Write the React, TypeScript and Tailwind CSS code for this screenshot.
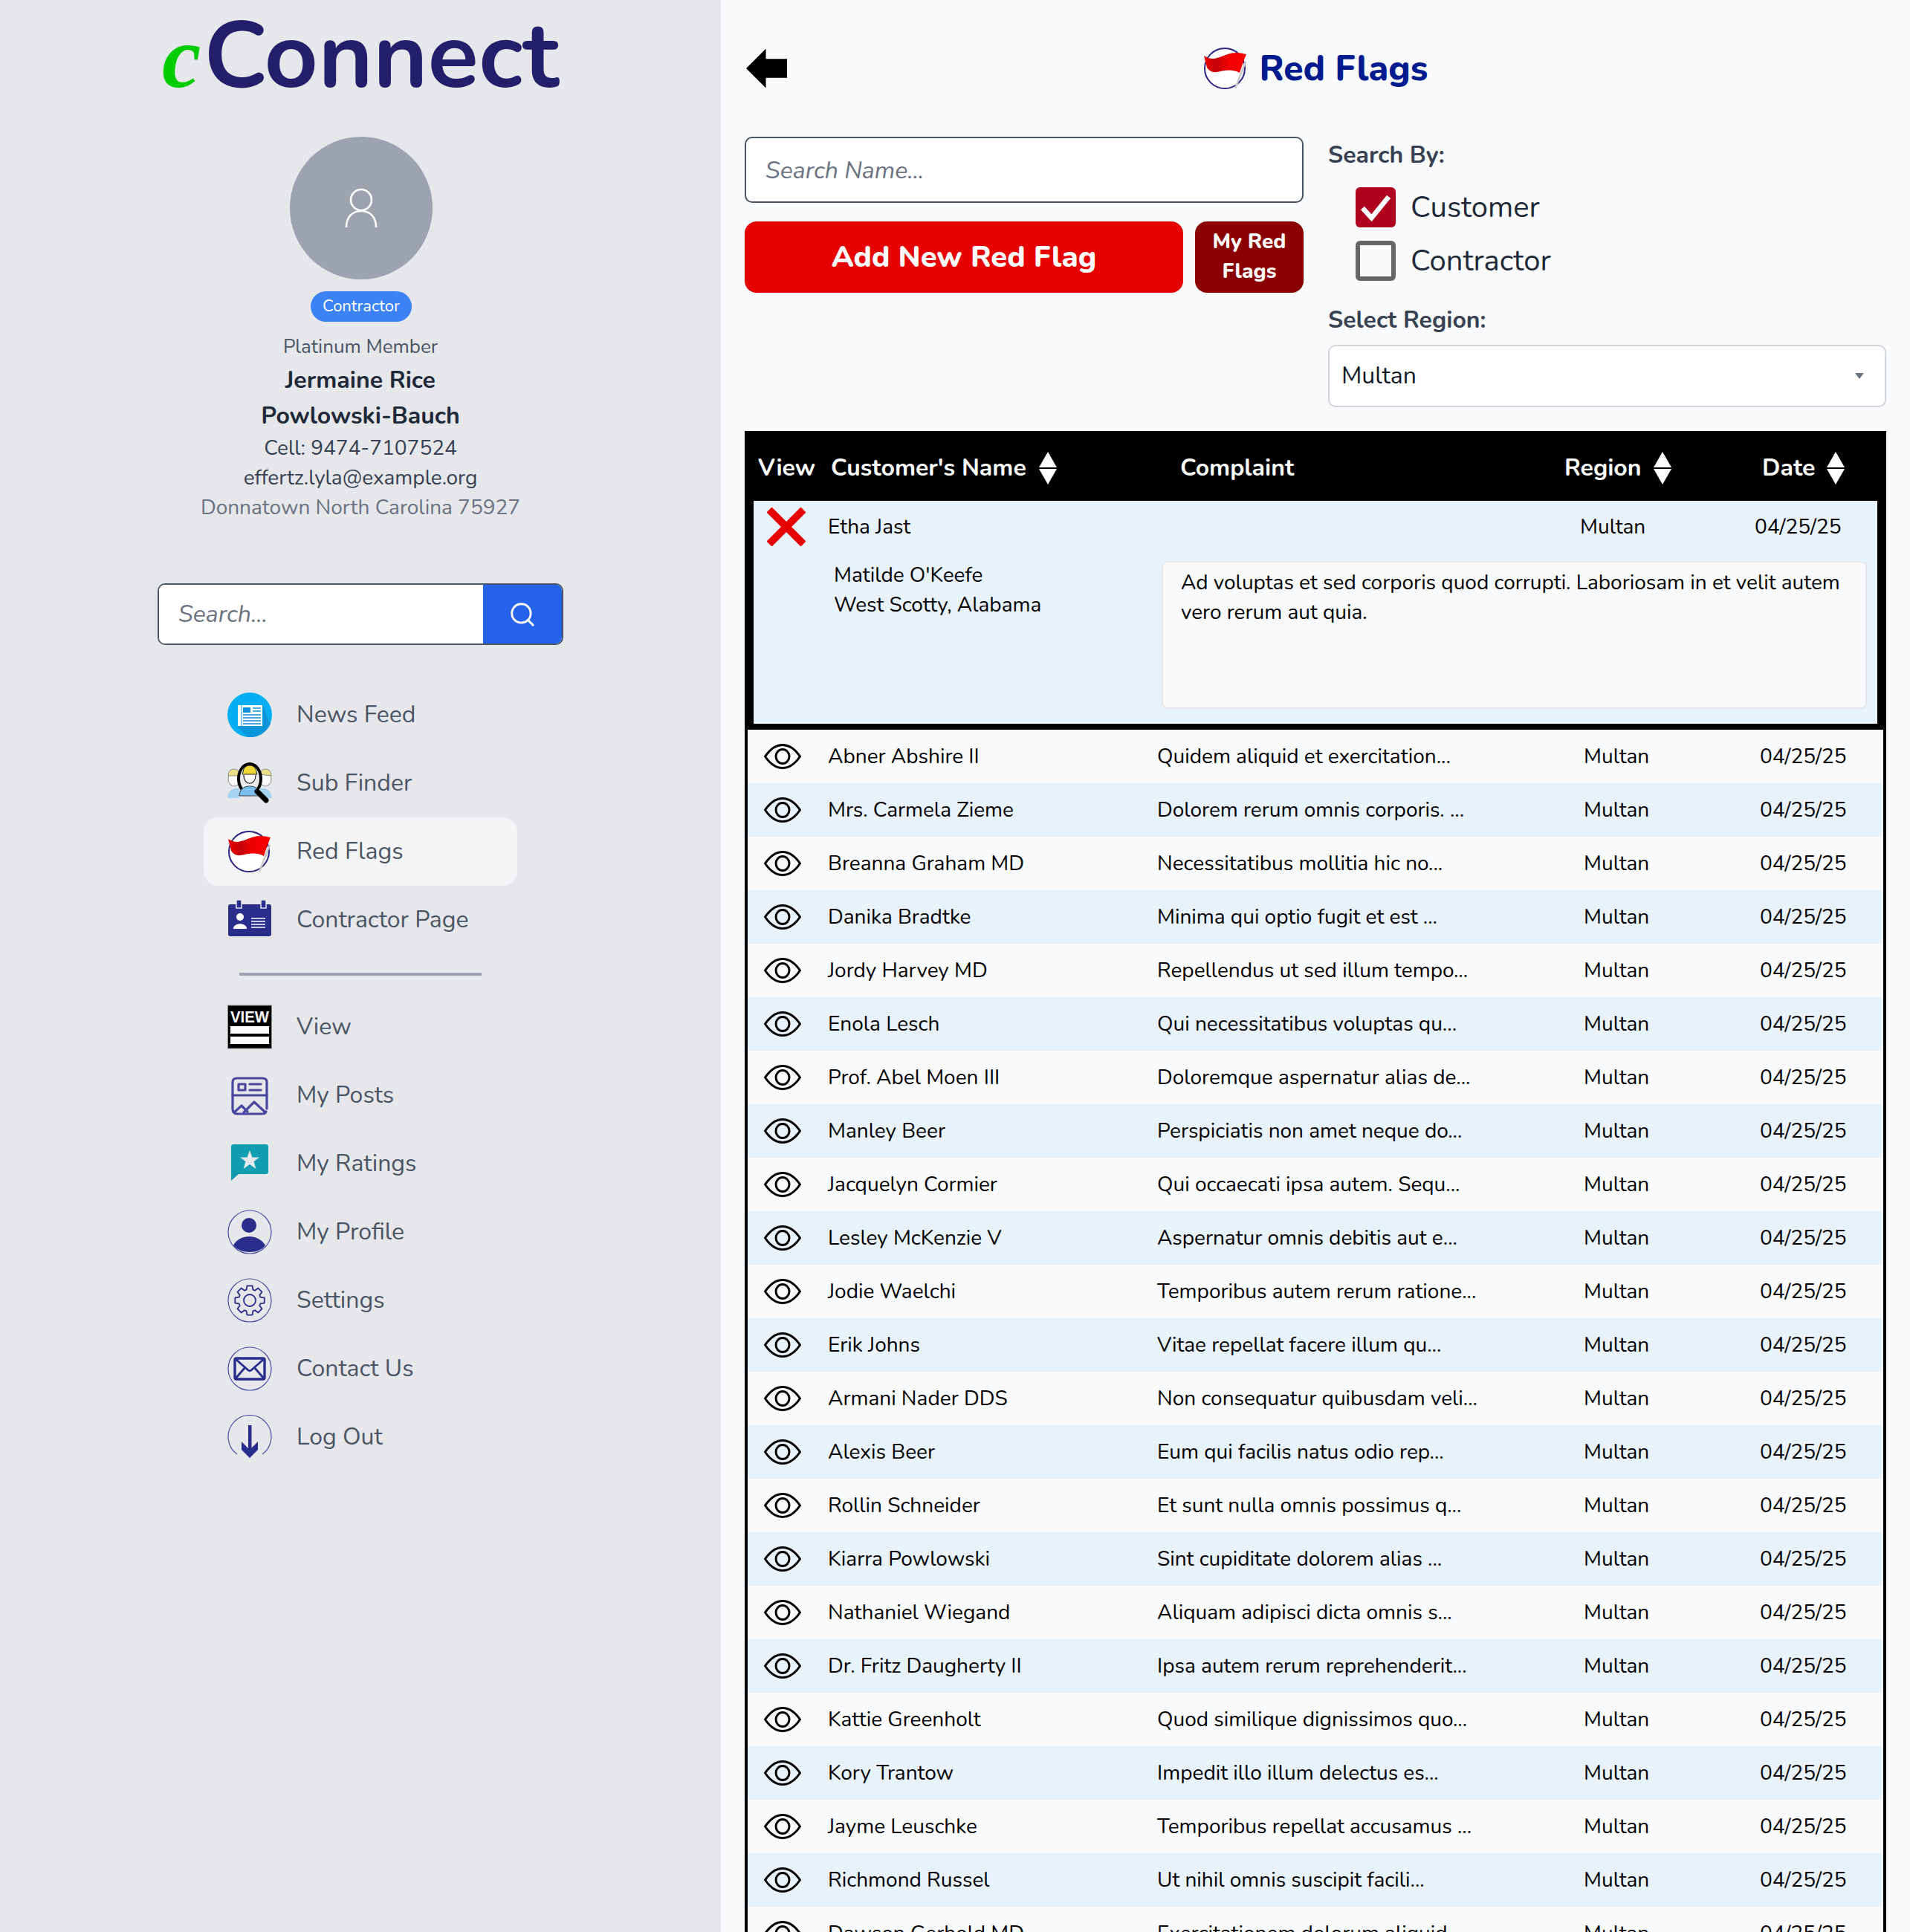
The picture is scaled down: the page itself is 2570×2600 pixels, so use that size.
import React from "react";
import { Search } from "lucide-react";

const rows: [string, string][] = [
  ["Abner Abshire II", "Quidem aliquid et exercitation..."],
  ["Mrs. Carmela Zieme", "Dolorem rerum omnis corporis. ..."],
  ["Breanna Graham MD", "Necessitatibus mollitia hic no..."],
  ["Danika Bradtke", "Minima qui optio fugit et est ..."],
  ["Jordy Harvey MD", "Repellendus ut sed illum tempo..."],
  ["Enola Lesch", "Qui necessitatibus voluptas qu..."],
  ["Prof. Abel Moen III", "Doloremque aspernatur alias de..."],
  ["Manley Beer", "Perspiciatis non amet neque do..."],
  ["Jacquelyn Cormier", "Qui occaecati ipsa autem. Sequ..."],
  ["Lesley McKenzie V", "Aspernatur omnis debitis aut e..."],
  ["Jodie Waelchi", "Temporibus autem rerum ratione..."],
  ["Erik Johns", "Vitae repellat facere illum qu..."],
  ["Armani Nader DDS", "Non consequatur quibusdam veli..."],
  ["Alexis Beer", "Eum qui facilis natus odio rep..."],
  ["Rollin Schneider", "Et sunt nulla omnis possimus q..."],
  ["Kiarra Powlowski", "Sint cupiditate dolorem alias ..."],
  ["Nathaniel Wiegand", "Aliquam adipisci dicta omnis s..."],
  ["Dr. Fritz Daugherty II", "Ipsa autem rerum reprehenderit..."],
  ["Kattie Greenholt", "Quod similique dignissimos quo..."],
  ["Kory Trantow", "Impedit illo illum delectus es..."],
  ["Jayme Leuschke", "Temporibus repellat accusamus ..."],
  ["Richmond Russel", "Ut nihil omnis suscipit facili..."],
  ["Dawson Gerhold MD", "Exercitationem dolorum aliquid..."],
];

const NAVY = "#2b2d8c";

function FlagIcon({ className, gid }: { className?: string; gid: string }) {
  return (
    <svg viewBox="0 0 60 60" className={className}>
      <defs>
        <linearGradient id={gid} x1="0" x2="1" y1="0" y2="0">
          <stop offset="0" stopColor="#ee0000" />
          <stop offset="0.3" stopColor="#c40008" />
          <stop offset="0.55" stopColor="#f00000" />
          <stop offset="1" stopColor="#fb0000" />
        </linearGradient>
      </defs>
      <circle cx="29" cy="30" r="27" fill="#fff" stroke="#2c2480" strokeWidth="2" />
      <path d="M57 21 L43 57" stroke="#c8c8c8" strokeWidth="2.5" />
      <path d="M1 13 C14 22 24 13 36 10 C44 8 50 9 58 11 C55 18 52 27 49 36 C38 30 28 33 18 35 C11 36 7 32 5 29 Z" fill={`url(#${gid})`} />
    </svg>
  );
}

function NewsIcon() {
  return (
    <svg viewBox="0 0 60 60" className="w-[60px] h-[60px]">
      <circle cx="30" cy="30" r="30" fill="#03aef2" />
      <path d="M13 46 L47 16 L58 42 A30 30 0 0 1 27 60 Z" fill="#0b96dc" />
      <rect x="14" y="17" width="33" height="28" fill="#fff" />
      <rect x="21" y="20" width="10" height="7" fill="#0b8fd8" />
      <path d="M34 21h11M34 25h11M21 30h24M21 34h24M21 38h24M21 42h24" stroke="#0b8fd8" strokeWidth="1.6" />
      <path d="M19 17V45" stroke="#0b96dc" strokeWidth="1" />
    </svg>
  );
}

function SubIcon() {
  return (
    <svg viewBox="0 0 60 60" className="w-[60px] h-[60px]">
      <ellipse cx="9" cy="24" rx="8" ry="10" fill="#fff" stroke="#999" strokeWidth="1.2" />
      <ellipse cx="51" cy="24" rx="8" ry="10" fill="#fff" stroke="#999" strokeWidth="1.2" />
      <path d="M1 20 A8 8 0 0 1 17 18 L17 20 Z M43 18 A8 8 0 0 1 59 20 Z" fill="#e8df8a" stroke="#777" strokeWidth="0.8" />
      <path d="M0 50 C1 38 9 36 16 37 L16 50 Z M60 50 C59 38 51 36 44 37 L44 50 Z" fill="#a5d3f2" />
      <ellipse cx="30" cy="24" rx="15" ry="20" fill="#e9ebef" stroke="#000" strokeWidth="4" />
      <path d="M16 47 C16 38 22 34 30 34 C38 34 44 38 44 47 Z" fill="#79bdec" stroke="#222" strokeWidth="0.8" />
      <path d="M21 15 A9 9 0 0 1 39 15 L40 18 L20 18 Z" fill="#f0d838" stroke="#222" strokeWidth="1" />
      <path d="M22 19 C22 34 38 34 38 19" fill="#fff" stroke="#222" strokeWidth="1.2" />
      <path d="M40 41 L52 53" stroke="#000" strokeWidth="7" strokeLinecap="round" />
    </svg>
  );
}

function BadgeIcon() {
  return (
    <svg viewBox="0 0 60 60" className="w-[60px] h-[60px]">
      <path d="M4 9 H56 Q59 9 59 12 V49 Q59 52 56 52 H4 Q1 52 1 49 V12 Q1 9 4 9 Z" fill={NAVY} />
      <rect x="12" y="3" width="7" height="11" fill={NAVY} stroke="#e5e7eb" strokeWidth="1.5" />
      <rect x="45" y="3" width="7" height="11" fill={NAVY} stroke="#e5e7eb" strokeWidth="1.5" />
      <circle cx="17" cy="26" r="5" fill="#fff" />
      <path d="M8 42 C8 33 26 33 26 42 Z" fill="#fff" />
      <path d="M32 28h19M32 32h19M32 36h19M32 40h19" stroke="#fff" strokeWidth="1.6" />
    </svg>
  );
}

function ViewIcon() {
  return (
    <svg viewBox="0 0 60 60" className="w-[60px] h-[60px]">
      <rect x="0.5" y="1" width="59" height="58" fill="#000" stroke="#888" />
      <text x="4" y="24" fontSize="22" fontWeight="700" fill="#fff" fontFamily="'Liberation Sans',sans-serif" textLength="52" lengthAdjust="spacingAndGlyphs">VIEW</text>
      <rect x="4" y="29" width="52" height="10" fill="#fff" />
      <rect x="4" y="43" width="52" height="10" fill="#fff" />
    </svg>
  );
}

function PostsIcon() {
  return (
    <svg viewBox="0 0 60 60" className="w-[60px] h-[60px]" fill="none" stroke="#4a479f" strokeWidth="3.2" strokeLinecap="round" strokeLinejoin="round">
      <path d="M53 48 V12 Q53 7 47 7 H13 Q7 7 7 12 V48 Q7 55 13 55 H47 Q51 55 52 52" />
      <path d="M7 30 H53" />
      <rect x="15" y="15" width="9" height="8" />
      <path d="M30 15 H45 M30 23 H45" />
      <path d="M9 53 L19 44 L27 52 M22 53 L36 39 L50 52" />
    </svg>
  );
}

function RatingsIcon() {
  return (
    <svg viewBox="0 0 60 60" className="w-[60px] h-[60px]">
      <path d="M8 4 H52 Q55 4 55 7 V41 Q55 44 52 44 H15 L5 53 V7 Q5 4 8 4 Z" fill="#119db0" />
      <polygon points="30,12 33.5,21.5 43,21.5 35.5,27 38.5,37 30,31 21.5,37 24.5,27 17,21.5 26.5,21.5" fill="#e5e7eb" />
    </svg>
  );
}

function ProfileIcon() {
  return (
    <svg viewBox="0 0 60 60" className="w-[60px] h-[60px]">
      <circle cx="30" cy="30" r="29" fill="none" stroke="#4d4fa5" strokeWidth="1.2" />
      <circle cx="29" cy="21" r="10" fill={NAVY} />
      <path d="M8 48 C16 32 42 32 51 48 C42 60 18 60 8 48 Z" fill={NAVY} />
    </svg>
  );
}

function Gear() {
  const n = 8;
  const pts: string[] = [];
  for (let i = 0; i < n; i++) {
    const a = (i / n) * Math.PI * 2 - Math.PI / 2;
    const s = 0.24;
    const p = (ang: number, r: number) => `${(30 + r * Math.cos(ang)).toFixed(2)},${(30 + r * Math.sin(ang)).toFixed(2)}`;
    pts.push(p(a - s * 1.25, 15), p(a - s * 0.75, 20), p(a + s * 0.75, 20), p(a + s * 1.25, 15));
  }
  return <polygon points={pts.join(" ")} fill="none" stroke={NAVY} strokeWidth="1.8" strokeLinejoin="round" />;
}

function SettingsIcon() {
  return (
    <svg viewBox="0 0 60 60" className="w-[60px] h-[60px]">
      <circle cx="30" cy="30" r="29" fill="none" stroke="#4d4fa5" strokeWidth="1.2" />
      <Gear />
      <circle cx="30" cy="30" r="8" fill="none" stroke={NAVY} strokeWidth="1.8" />
    </svg>
  );
}

function MailIcon() {
  return (
    <svg viewBox="0 0 60 60" className="w-[60px] h-[60px]">
      <circle cx="30" cy="30" r="29" fill="none" stroke="#4d4fa5" strokeWidth="1.2" />
      <rect x="10" y="16" width="40" height="28" rx="2" fill="none" stroke={NAVY} strokeWidth="3.4" />
      <path d="M11 17 L28 32 Q30 33.5 32 32 L49 17 M11 43 L24 28 M49 43 L36 28" fill="none" stroke={NAVY} strokeWidth="2.8" />
    </svg>
  );
}

function LogoutIcon() {
  return (
    <svg viewBox="0 0 60 60" className="w-[60px] h-[60px]">
      <path d="M13 53 A29 29 0 1 1 47 53" fill="none" stroke="#4d4fa5" strokeWidth="1.2" />
      <rect x="28" y="14" width="4.5" height="38" fill={NAVY} />
      <path d="M19 36 L19 47 L30 58 L41 47 L41 36 L30 47 Z" fill={NAVY} />
    </svg>
  );
}

const nav1: [string, React.ReactNode, boolean][] = [
  ["News Feed", <NewsIcon />, false],
  ["Sub Finder", <SubIcon />, false],
  ["Red Flags", <FlagIcon className="w-[60px] h-[60px]" gid="flagNav" />, true],
  ["Contractor Page", <BadgeIcon />, false],
];
const nav2: [string, React.ReactNode][] = [
  ["View", <ViewIcon />],
  ["My Posts", <PostsIcon />],
  ["My Ratings", <RatingsIcon />],
  ["My Profile", <ProfileIcon />],
  ["Settings", <SettingsIcon />],
  ["Contact Us", <MailIcon />],
  ["Log Out", <LogoutIcon />],
];

function NavRow({ label, icon, active }: { label: string; icon: React.ReactNode; active?: boolean }) {
  return (
    <div className={`h-[92px] flex items-center pl-[32px] gap-[33px] rounded-[20px] text-[32px] text-[#4b5563] ${active ? "bg-[#f3f4f6]" : ""}`}>
      <span className="w-[60px] h-[60px] shrink-0">{icon}</span>
      <span>{label}</span>
    </div>
  );
}

function Sort() {
  return (
    <svg viewBox="0 0 24 44" className="w-[24px] h-[44px]">
      <polygon points="12,0 24,21 0,21" fill="#fff" />
      <polygon points="0,23 24,23 12,44" fill="#fff" />
    </svg>
  );
}

function Eye() {
  return (
    <svg viewBox="0 0 50 34" className="w-[50px] h-[34px]" fill="none" stroke="#000" strokeWidth="3">
      <path d="M1.5 17 C9 6 16 1.5 25 1.5 C34 1.5 41 6 48.5 17 C41 28 34 32.5 25 32.5 C16 32.5 9 28 1.5 17 Z" />
      <ellipse cx="25" cy="17" rx="9" ry="9.5" />
    </svg>
  );
}

export default function App() {
  return (
    <div className="flex w-[2570px] h-[2600px] overflow-hidden bg-[#f9fafb] font-['Nunito','Lato',sans-serif] text-black">
      <aside className="w-[970px] shrink-0 bg-[#e5e7eb] flex flex-col items-center">
        <div className="h-[184px] w-full flex justify-center items-start">
          <div className="flex items-baseline leading-[130px] pt-[11px] font-bold text-[126px] text-[#231f6b]">
            <span className="font-['Liberation_Serif',serif] italic text-[#00cc00] text-[118px] mr-[4px]">c</span>
            <span>Connect</span>
          </div>
        </div>
        <div className="ml-[2px] w-[192px] h-[192px] rounded-full bg-[#9ca3af] flex items-center justify-center">
          <svg viewBox="0 0 44 54" className="w-[44px] h-[54px]" fill="none" stroke="#fff" strokeWidth="2.6">
            <circle cx="22" cy="16" r="14" />
            <path d="M2 53 C2 38 11 31 22 31 C33 31 42 38 42 53" />
          </svg>
        </div>
        <div className="ml-[2px] mt-[16px] h-[41px] w-[136px] rounded-full bg-[#3b82f6] text-white text-[22px] flex items-center justify-center">Contractor</div>
        <div className="mt-[14px] h-[40px] leading-[40px] text-[26px] text-[#4b5563]">Platinum Member</div>
        <div className="mt-[1px] h-[48px] leading-[48px] text-[32px] font-bold text-[#1f2937]">Jermaine Rice</div>
        <div className="h-[47px] leading-[48px] text-[32px] font-bold text-[#1f2937]">Powlowski-Bauch</div>
        <div className="h-[40px] leading-[40px] text-[28px] text-[#374151]">Cell: 9474-7107524</div>
        <div className="h-[40px] leading-[40px] text-[28px] text-[#374151]">effertz.lyla@example.org</div>
        <div className="h-[40px] leading-[40px] text-[28px] text-[#6b7280]">Donnatown North Carolina 75927</div>
        <div className="mt-[82px] w-[546px] h-[83px] flex rounded-[10px] border-2 border-[#4b5563] overflow-hidden bg-white">
          <input readOnly placeholder="Search..." className="flex-1 min-w-0 pl-[26px] text-[32px] bg-white outline-none placeholder:italic placeholder:text-[#6b7280]" />
          <div className="w-[106px] bg-[#2563eb] flex items-center justify-center text-white">
            <Search size={38} strokeWidth={1.8} />
          </div>
        </div>
        <nav className="mt-[48px] w-[422px]">
          {nav1.map(([l, i, a]) => <NavRow key={l} label={l} icon={i} active={a} />)}
          <div className="mt-[25px] mb-[23px] mx-[48px] h-[4px] bg-[#9ca3af]" />
          {nav2.map(([l, i]) => <NavRow key={l} label={l} icon={i} />)}
        </nav>
      </aside>

      <main className="flex-1 px-[32px] min-w-0">
        <div className="h-[184px] flex items-center">
          <svg viewBox="0 0 56 54" className="ml-[2px] w-[55px] h-[54px] shrink-0">
            <polygon points="0,27 27,0 27,14 56,14 56,40 27,40 27,54" fill="#000" />
          </svg>
          <div className="flex-1 flex items-center justify-center gap-[16px]">
            <FlagIcon className="w-[60px] h-[60px]" gid="flagTitle" />
            <span className="text-[48px] font-extrabold text-[#001a8f]">Red Flags</span>
          </div>
          <div className="w-[57px] shrink-0" />
        </div>

        <div className="flex gap-[33px]">
          <div className="w-[752px] shrink-0">
            <input readOnly placeholder="Search Name..." className="w-full h-[89px] rounded-[10px] border-2 border-[#4b5563] bg-white pl-[26px] pt-[2px] text-[32px] outline-none placeholder:italic placeholder:text-[#6b7280]" />
            <div className="mt-[25px] flex gap-[16px] h-[96px]">
              <div className="flex-1 rounded-[16px] bg-[#e60000] text-white text-[40px] font-extrabold flex items-center justify-center">Add New Red Flag</div>
              <div className="w-[146px] pb-[2px] rounded-[16px] bg-[#8b0000] text-white text-[28px] leading-[40px] font-extrabold flex items-center justify-center text-center">My Red<br />Flags</div>
            </div>
          </div>
          <div className="flex-1 min-w-0 pt-[5px]">
            <div className="h-[40px] leading-[40px] text-[32px] font-bold text-[#374151]">Search By:</div>
            <div className="mt-[23px] ml-[37px] flex items-center gap-[20px] h-[54px]">
              <div className="w-[54px] h-[54px] rounded-[6px] bg-[#b00020] flex items-center justify-center">
                <svg viewBox="0 0 40 40" className="w-[44px] h-[44px]" fill="none" stroke="#fff" strokeWidth="6">
                  <path d="M4 21 L15 33 L36 7" />
                </svg>
              </div>
              <span className="text-[40px] text-[#1f2937]">Customer</span>
            </div>
            <div className="mt-[18px] ml-[37px] flex items-center gap-[20px] h-[54px]">
              <div className="w-[54px] h-[54px] rounded-[6px] border-[6px] border-[#666666]" />
              <span className="text-[40px] text-[#1f2937]">Contractor</span>
            </div>
            <div className="mt-[33px] h-[40px] leading-[40px] text-[32px] font-bold text-[#374151]">Select Region:</div>
            <div className="mt-[13px] h-[84px] rounded-[10px] border-2 border-[#d1d5db] bg-white flex items-center justify-between pl-[16px] pr-[28px] text-[32px] text-[#111827]">
              <span>Multan</span>
              <span className="w-0 h-0 border-x-[6px] border-x-transparent border-t-[8px] border-t-[#6b7280]" />
            </div>
          </div>
        </div>

        <div className="mt-[32px] border-x-4 border-black">
          <div className="-mx-[4px] pr-[4px] box-content h-[88px] pt-[6px] bg-black text-white text-[32px] font-bold grid grid-cols-[98px_470px_517px_266px_1fr] items-center pl-[18px]">
            <div>View</div>
            <div className="flex items-center gap-[17px]"><span>Customer's Name</span><Sort /></div>
            <div>Complaint</div>
            <div className="flex items-center gap-[16px]"><span>Region</span><Sort /></div>
            <div className="flex items-center gap-[16px]"><span>Date</span><Sort /></div>
          </div>
          <div className="border-x-[8px] border-b-[8px] border-black bg-[#e8f2fb] h-[308px] text-[28px]">
            <div className="grid grid-cols-[100px_1012px_235px_1fr] h-[70px] items-center">
              <div className="pl-[18px]">
                <svg viewBox="0 0 52 52" className="w-[52px] h-[52px]" fill="none" stroke="#e60000" strokeWidth="10">
                  <path d="M3 3 L49 49 M49 3 L3 49" />
                </svg>
              </div>
              <div>Etha Jast</div>
              <div>Multan</div>
              <div>04/25/25</div>
            </div>
            <div className="flex mt-[11px]">
              <div className="w-[549px] pl-[108px] -mt-[1px] leading-[40px] shrink-0">
                <div>Matilde O'Keefe</div>
                <div>West Scotty, Alabama</div>
              </div>
              <div className="w-[949px] h-[199px] rounded-[8px] border-2 border-[#e5e7eb] bg-[#f9fafb] pl-[24px] pr-[16px] pt-[7px] leading-[40px]">
                Ad voluptas et sed corporis quod corrupti. Laboriosam in et velit autem vero rerum aut quia.
              </div>
            </div>
          </div>
          {rows.map(([n, c], i) => (
            <div key={n} className={`h-[72px] pb-[1px] grid grid-cols-[108px_443px_574px_237px_1fr] items-center text-[28px] ${i % 2 ? "bg-[#e8f2fb]" : "bg-[#f9fafb]"}`}>
              <div className="pl-[22px] flex"><Eye /></div>
              <div>{n}</div>
              <div>{c}</div>
              <div>Multan</div>
              <div>04/25/25</div>
            </div>
          ))}
        </div>
      </main>
    </div>
  );
}
